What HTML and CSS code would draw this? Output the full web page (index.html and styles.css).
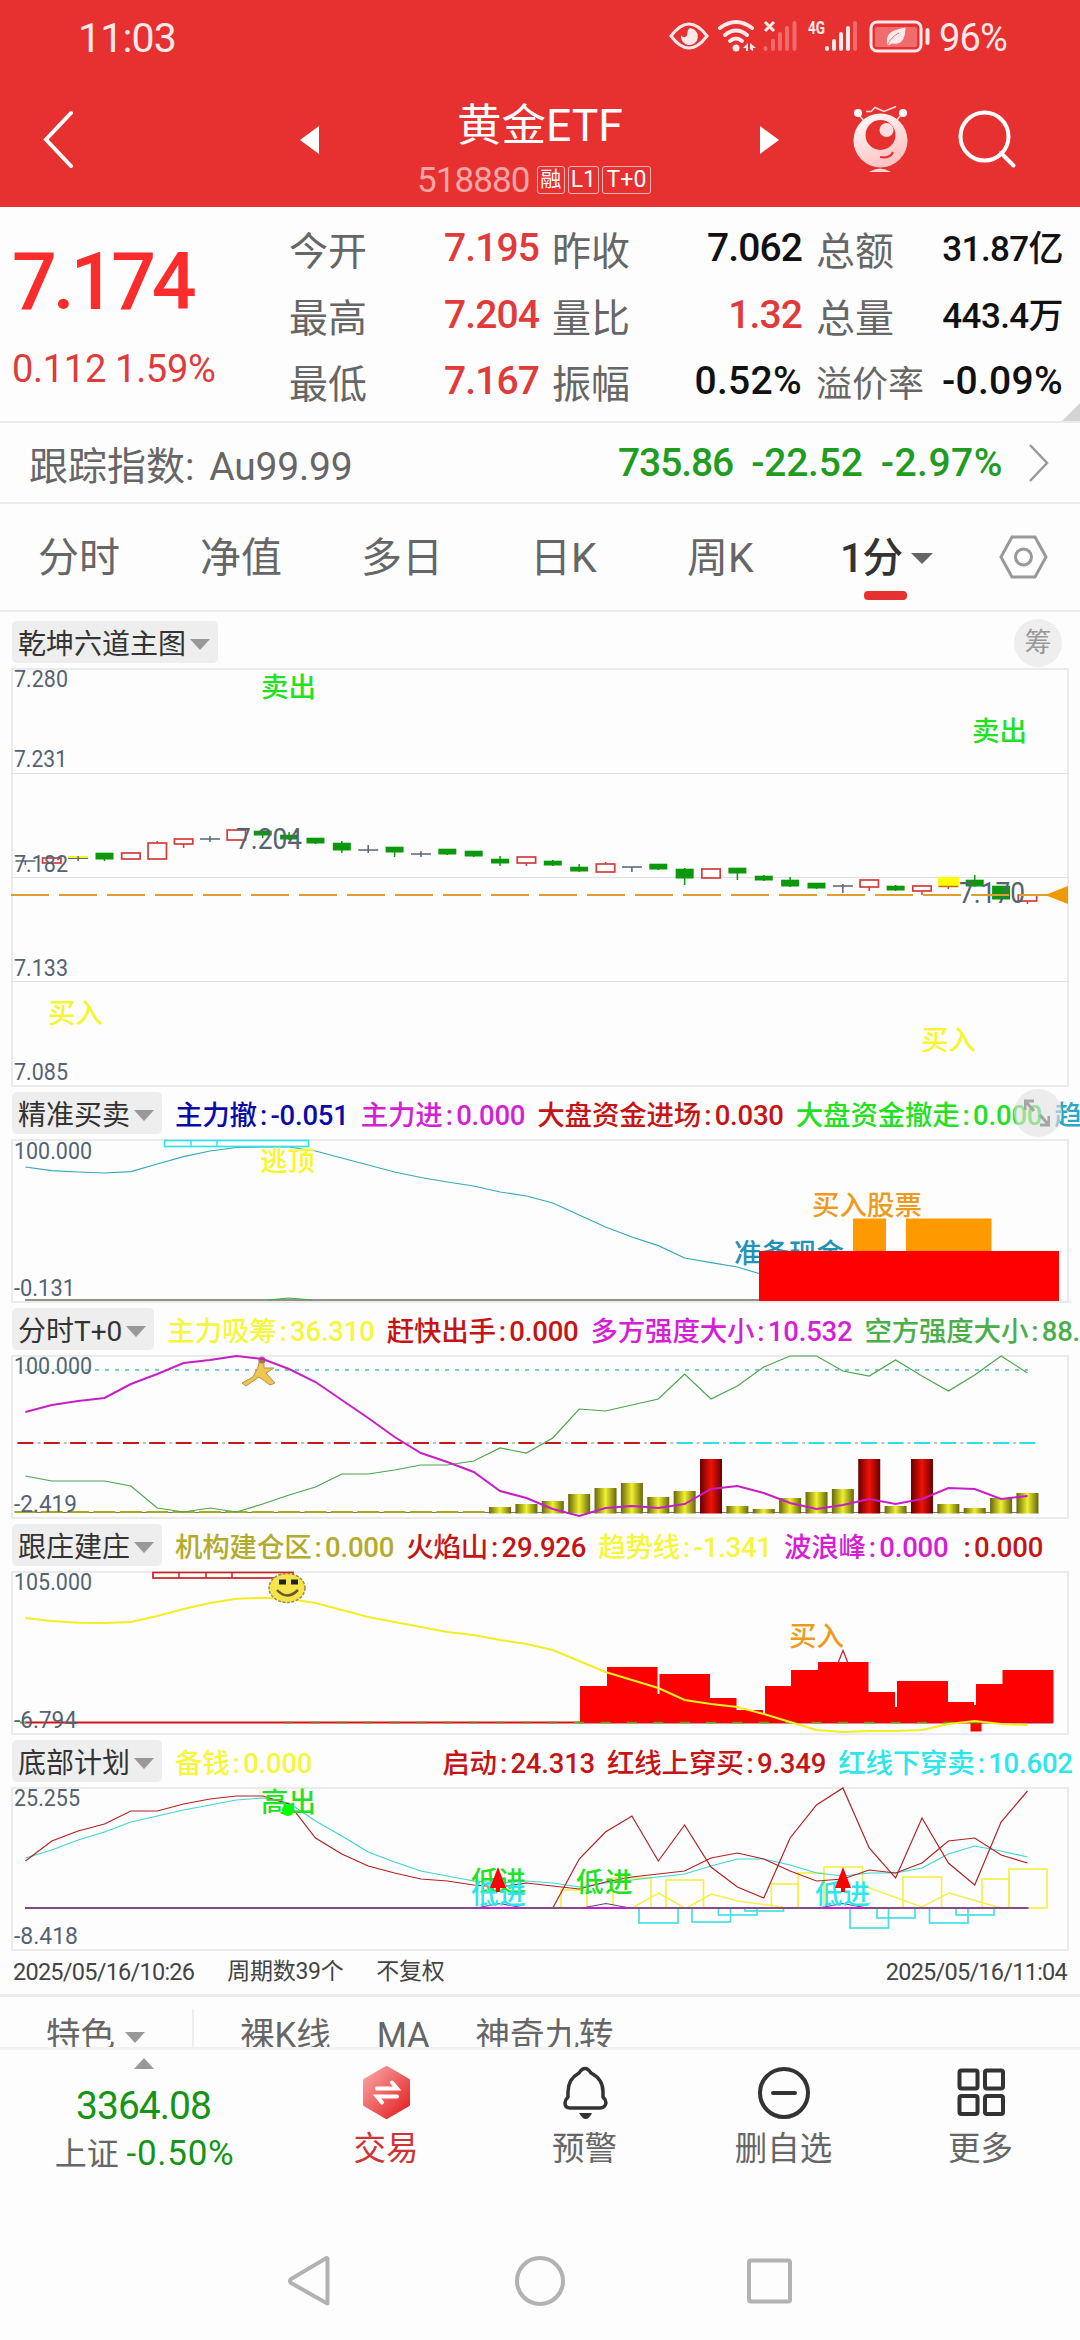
FILE: index.html
```html
<!DOCTYPE html>
<html lang="zh-CN">
<head>
  <meta charset="utf-8">
  <title>黄金ETF 518880</title>
  <meta name="viewport" content="width=device-width, initial-scale=1">
  <link rel="stylesheet" href="styles.css">
</head>
<body>
  <header class="top">
    <div class="status">
      <span class="clock">11:03</span>
      <svg class="status-icons" width="264" height="40" viewBox="668 16 264 40" fill="none" stroke="#ffe9e9">
        <path d="M671 36Q689 12 707 36Q689 60 671 36Z" stroke-width="3" />
        <path d="M690 28a8.500 8.500 0 1 1 -9 7c2 3 5 3 6 0 1-3 0-5 3-7z" fill="#ffe9e9" stroke="none" />
        <g stroke-width="4" stroke-linecap="round">
          <path d="M720 28q16-12 32 0" /><path d="M725 35q11-9 22 0" /><path d="M730 41q6-5 12 0" />
        </g>
        <g fill="#ffe9e9" stroke="none">
          <circle cx="736" cy="48" r="3.500" />
          <path d="M743 48l5-5v8h-2v-3zM750 43l6 5h-3v3l-3-2z" />
        </g>
        <path d="M765 22l9 9M774 22l-9 9" stroke-width="3" />
        <g stroke="#f46a6a" stroke-width="4" stroke-linecap="round">
          <path d="M765.500 48v1M773 41v8M780 34v15M787 28v21M794.500 23v26M855 23v26" />
        </g>
        <text x="808" y="34" class="net" textLength="17" lengthAdjust="spacingAndGlyphs">4G</text>
        <g stroke-width="4" stroke-linecap="round"><path d="M827 48v1M834 41v8M841 34v15M848 28v21" /></g>
        <rect x="871" y="22" width="50" height="29" rx="6" stroke-width="3" />
        <rect x="875" y="27" width="42" height="20" rx="2" fill="#f16d6d" stroke="none" />
        <path d="M887 45c-3-12 6-16 19-18 0 13-5 19-14 17l-3 2zM888 44c3-6 7-9 11-11" fill="#ffe9e9" stroke="#f16d6d" />
        <path d="M927.500 30v13" stroke-width="4" stroke-linecap="round" />
      </svg>
      <span class="battery">96%</span>
    </div>
    <div class="titlebar">
      <svg class="back" width="32" height="58" viewBox="43 110 32 58"><path d="M71 113L46 139.500L71 166" /></svg>
      <svg class="prev" width="20" height="28"><path d="M19 0v28L0 14z" /></svg>
      <div class="title">
        <h1>黄金ETF</h1>
        <p><span class="code">518880</span><b>融</b><b>L1</b><b>T+0</b></p>
      </div>
      <svg class="next" width="20" height="28"><path d="M0 0v28l19-14z" /></svg>
      <svg class="mascot" width="56" height="70" viewBox="852 105 56 70">
        <defs><linearGradient id="body" x1="0" y1="0" x2=".5" y2="1"><stop offset="0" stop-color="#fff" /><stop offset="1" stop-color="#ffc2c2" /></linearGradient></defs>
        <path d="M865 111.500l5 0 4-4 9 4 12-5M858 115l5 6M900 115l-5 6" fill="none" stroke="#ffdada" stroke-width="1.500" />
        <circle cx="857" cy="113" r="4" fill="#fff" /><circle cx="902" cy="113" r="4" fill="#fff" />
        <circle cx="879.500" cy="140.500" r="27" fill="url(#body)" />
        <circle cx="879.500" cy="135" r="15" fill="#e73030" />
        <circle cx="885.500" cy="130" r="7" fill="#ffdede" />
        <path d="M879 157q10 2 13-5" fill="none" stroke="#e73030" stroke-width="2" />
        <path d="M868 172q11-7 22 0z" fill="#ffd5d5" />
      </svg>
      <svg class="search" width="60" height="60" viewBox="956 109 60 60"><circle cx="983.500" cy="136.500" r="24" /><path d="M1000 153l12.500 12.500" /></svg>
    </div>
  </header>

  <section class="quote">
    <div class="last">
      <strong>7.174</strong>
      <span>0.112 1.59%</span>
    </div>
    <dl class="facts">
      <dt>今开</dt><dd class="red">7.195</dd><dt>昨收</dt><dd>7.062</dd><dt>总额</dt><dd class="unit">31.87亿</dd>
      <dt>最高</dt><dd class="red">7.204</dd><dt>量比</dt><dd class="red">1.32</dd><dt>总量</dt><dd class="unit">443.4万</dd>
      <dt>最低</dt><dd class="red">7.167</dd><dt>振幅</dt><dd class="pct">0.52%</dd><dt class="small">溢价率</dt><dd class="pct">-0.09%</dd>
    </dl>
    <i class="corner"></i>
  </section>

  <section class="track">
    <span>跟踪指数: <em>Au99.99</em></span>
    <span class="green"><em>735.86</em><em>-22.52</em><em>-2.97%</em></span>
    <svg width="24" height="42"><path d="M3 3l17 18L3 39" /></svg>
  </section>

  <nav class="tabs">
    <a>分时</a><a>净值</a><a>多日</a><a>日K</a><a>周K</a>
    <a class="active">1分<i class="caret"></i></a>
    <svg width="50" height="46" viewBox="997 534 50 46"><path d="M1011 537h23l11 20-11 20h-23l-11-20z" /><circle cx="1022.500" cy="557" r="8" /></svg>
  </nav>

  <main class="charts">
    <div class="bar first"><span class="tag">乾坤六道主图<i class="caret"></i></span><span class="round">筹</span></div>
    <svg class="plot main" id="kline" viewBox="11 668 1058 419"></svg>

    <div class="bar">
      <span class="tag">精准买卖<i class="caret"></i></span>
      <div class="legend">
        <span style="color:#0a0aa8">主力撤<i>:</i>-0.051</span>
        <span style="color:#d41fd4">主力进<i>:</i>0.000</span>
        <span style="color:#c51414">大盘资金进场<i>:</i>0.030</span>
        <span style="color:#22e022">大盘资金撤走<i>:</i>0.000</span>
        <span style="color:#2ba6c4">趋势<i>:</i>8.2</span>
      </div>
      <span class="round expand"><svg width="26" height="28"><path d="M1 11V2h9M2 3l8 9M25 17v9h-9M24 25l-8-9" /></svg></span>
    </div>
    <svg class="plot" id="precise" viewBox="11 1139 1058 164"></svg>

    <div class="bar">
      <span class="tag">分时T+0<i class="caret"></i></span>
      <div class="legend">
        <span style="color:#f6f63c">主力吸筹<i>:</i>36.310</span>
        <span style="color:#c51414">赶快出手<i>:</i>0.000</span>
        <span style="color:#d41fd4">多方强度大小<i>:</i>10.532</span>
        <span style="color:#4bae4b">空方强度大小<i>:</i>88.345</span>
      </div>
    </div>
    <svg class="plot" id="tzero" viewBox="11 1355 1058 164"></svg>

    <div class="bar">
      <span class="tag">跟庄建庄<i class="caret"></i></span>
      <div class="legend">
        <span style="color:#b3ab2c">机构建仓区<i>:</i>0.000</span>
        <span style="color:#c51414">火焰山<i>:</i>29.926</span>
        <span style="color:#f6f63c">趋势线<i>:</i>-1.341</span>
        <span style="color:#d41fd4">波浪峰<i>:</i>0.000</span>
        <span style="color:#c51414"><i>:</i>0.000</span>
      </div>
    </div>
    <svg class="plot" id="banker" viewBox="11 1571 1058 164"></svg>

    <div class="bar">
      <span class="tag">底部计划<i class="caret"></i></span>
      <div class="legend">
        <span style="color:#f6f63c">备钱<i>:</i>0.000</span>
        <span class="start" style="color:#c51414">启动<i>:</i>24.313</span>
        <span style="color:#c51414">红线上穿买<i>:</i>9.349</span>
        <span style="color:#2ce6ea">红线下穿卖<i>:</i>10.602</span>
      </div>
    </div>
    <svg class="plot" id="bottom" viewBox="11 1787 1058 164"></svg>

    <div class="dates">
      <span>2025/05/16/10:26</span><span class="cn">周期数39个</span><span class="cn">不复权</span><span>2025/05/16/11:04</span>
    </div>
  </main>

  <div class="features">
    <span class="pick">特色<i class="caret"></i></span><span>裸K线</span><span>MA</span><span>神奇九转</span>
  </div>

  <footer class="actions">
    <div class="index">
      <i class="up"></i>
      <span class="pts">3364.08</span>
      <span class="chg">上证 <em>-0.50%</em></span>
    </div>
    <div class="action hot">
      <svg width="56" height="56" viewBox="358 2065 56 56">
        <defs><linearGradient id="hex" x1="0" y1="0" x2="1" y2="1"><stop offset="0.100" stop-color="#f69a9a" /><stop offset=".9" stop-color="#e62a2a" /></linearGradient></defs>
        <path d="M386.500 2068L408 2080.500V2104.500L386.500 2117L365 2104.500V2080.500Z" fill="url(#hex)" stroke="url(#hex)" stroke-width="4" stroke-linejoin="round" />
        <path d="M377 2088.500h20l-5-6M397 2096.500h-20l5 6" fill="none" stroke="#fff" stroke-width="4" stroke-linecap="round" />
      </svg>
      <span>交易</span>
    </div>
    <div class="action">
      <svg width="56" height="56" viewBox="556 2065 56 56">
        <path d="M578 2073Q584 2064 590 2073Q602 2079 602 2092V2097Q605 2100 605 2103Q604 2108 599 2108H569Q564 2108 564 2103Q564 2100 567 2097V2092Q567 2079 578 2073Z" fill="none" stroke="#333" stroke-width="3.500" stroke-linejoin="round" />
        <path d="M578 2113h13q-6 12-13 0z" fill="#333" />
      </svg>
      <span>预警</span>
    </div>
    <div class="action">
      <svg width="56" height="56" viewBox="755 2065 56 56" fill="none" stroke="#333" stroke-width="4"><circle cx="783" cy="2093" r="24" /><path d="M772 2093h22" stroke-linecap="round" /></svg>
      <span>删自选</span>
    </div>
    <div class="action">
      <svg width="56" height="56" viewBox="952 2065 56 56" fill="none" stroke="#333" stroke-width="4">
        <rect x="958.500" y="2070.500" width="18" height="18" rx="2" /><rect x="984" y="2070.500" width="18" height="18" rx="2" />
        <rect x="958.500" y="2096" width="18" height="18" rx="2" /><rect x="984" y="2096" width="18" height="18" rx="2" />
      </svg>
      <span>更多</span>
    </div>
  </footer>

  <div class="sysnav">
    <svg width="48" height="56" viewBox="284 2254 48 56"><path d="M327.500 2260v44q0 1-1 0L291 2284q-2-2 0-4l35.500-21q1 0 1 1z" /></svg>
    <svg width="56" height="56" viewBox="512 2254 56 56"><circle cx="540" cy="2282" r="23" /></svg>
    <svg width="56" height="56" viewBox="741 2254 56 56"><rect x="749" y="2261.500" width="41" height="41" rx="2" /></svg>
  </div>

  <script src="charts.js"></script>
</body>
</html>
```
FILE: styles.css
```css
* { box-sizing: border-box; }
body { margin: 0; width: 1080px; height: 2340px; overflow: hidden; background: #fdfdfd; color: #666; font-family: Roboto, "Noto Sans CJK SC", sans-serif; }
h1, p, dl, dd { margin: 0; font-weight: 400; }
em, i { font-style: normal; }
svg { display: block; }
.caret { display: inline-block; border: 10px solid transparent; border-top: 11px solid #999; border-bottom: 0; }

/* header */
.top { height: 207px; background: #e73030; color: #fff; }
.status { display: flex; align-items: center; height: 72px; padding-left: 78px; }
.clock { width: 590px; font-size: 41px; letter-spacing: -.8px; padding-top: 4px; color: #ffe9e9; }
.battery { margin-left: 7px; padding-top: 4px; font-size: 38px; letter-spacing: -.8px; color: #ffe9e9; }
.net { font-size: 19px; font-weight: 700; fill: #ffe9e9; stroke: none; }
.titlebar { display: flex; height: 135px; padding-left: 43px; }
.titlebar > svg { flex: none; }
.back { margin-top: 38px; fill: none; stroke: #fff; stroke-width: 4; stroke-linecap: round; }
.prev { margin: 54px 0 0 225px; fill: #fff; }
.title { width: 440px; text-align: center; }
.title h1 { margin-top: 23px; height: 62px; line-height: 62px; font-size: 44.5px; }
.title p { display: flex; justify-content: center; align-items: center; height: 40px; margin-top: 3px; padding-right: 12px; gap: 3px; }
.code { margin-right: 4px; font-size: 35px; letter-spacing: -.9px; color: #f7a5a5; }
.title b { height: 28px; min-width: 28px; padding: 0 2px; border: 1.5px solid #f9b5b5; border-radius: 3px; font-size: 23px; line-height: 25px; font-weight: 400; }
.title b:nth-child(2) { font-size: 21px; }
.title b:last-child { min-width: 49px; }
.next { margin-top: 54px; fill: #fff; }
.mascot { margin: 33px 0 0 73px; }
.search { margin: 37px 0 0 48px; fill: none; stroke: #fff; stroke-width: 4; stroke-linecap: round; }

/* quote */
.quote { position: relative; display: flex; height: 216px; padding: 10px 17px 0 12px; border-bottom: 2px solid #ebebeb; }
.last { width: 277px; color: #e03a3a; }
.last strong { display: block; height: 114px; padding-top: 8px; line-height: 114px; font-size: 79px; font-weight: 500; letter-spacing: -4.2px; color: #fb2c2c; }
.last span { display: block; margin-top: 8px; line-height: 60px; font-size: 38px; letter-spacing: -.3px; white-space: nowrap; }
.facts { display: grid; flex: 1; grid-template-columns: 120px 130px 110px 153px 124px 137px; grid-template-rows: repeat(3, 66.5px); line-height: 62px; font-size: 39px; }
.facts dt { padding-top: 4px; white-space: nowrap; }
.facts dt:nth-of-type(3n + 2) { padding-left: 13px; }
.facts dt:nth-of-type(3n) { padding-left: 14px; }
.facts dt.small { font-size: 36px; }
.facts dd { text-align: right; color: #111; letter-spacing: -.9px; font-weight: 500; white-space: nowrap; }
.facts dd.red { color: #e03a3a; }
.facts dd.unit { font-size: 35px; letter-spacing: -.6px; padding-top: 2px; }
.facts dd.pct { letter-spacing: .3px; }
.corner { position: absolute; right: 0; bottom: 0; border-left: 18px solid transparent; border-bottom: 18px solid #d5d5d5; }

.track { display: flex; align-items: center; height: 81px; padding-left: 29px; border-bottom: 2px solid #ebebeb; font-size: 39px; }
.track em { margin-left: 5px; letter-spacing: -.2px; }
.track .green { display: flex; margin-left: auto; font-weight: 500; color: #219c21; }
.track .green em { margin-left: 18px; }
.track .green em:first-child { letter-spacing: -1.1px; }
.track .green em:last-child { letter-spacing: .5px; }
.track svg { margin: 0 29px 0 24px; fill: none; stroke: #999; stroke-width: 2.5; }

/* period tabs */
.tabs { display: grid; grid-template-columns: 162px 161px 169px 157px 153px 158px 50px; height: 108px; padding-left: 38px; border-bottom: 2px solid #ebebeb; line-height: 109px; font-size: 41px; }
.tabs .active { position: relative; font-weight: 500; color: #333; letter-spacing: -1px; }
.tabs .active::after { content: ""; position: absolute; left: 24px; top: 87px; width: 43px; height: 9px; border-radius: 4px; background: #e73030; }
.tabs .caret { margin-left: 9px; vertical-align: 8px; border-width: 11px 11px 0; border-top-color: #666; }
.tabs svg { margin-top: 30px; fill: none; stroke: #999; stroke-width: 3; }

/* indicator panels */
.bar { position: relative; display: flex; align-items: center; height: 52px; padding-left: 12px; overflow: hidden; }
.bar.first { height: 56px; padding-top: 4px; }
.tag { flex: none; display: flex; align-items: center; gap: 4px; height: 42px; padding: 0 8px 0 6px; border-radius: 5px; background: #eee; color: #333; font-size: 28px; }
.tag .caret { margin-top: 4px; }
.round { position: absolute; right: 18px; top: 7px; width: 48px; height: 48px; border-radius: 50%; background: #eee; color: #999; font-size: 27px; line-height: 48px; text-align: center; }
.round.expand { top: 2px; background: rgba(225, 225, 225, .6); }
.expand svg { margin: 10px 0 0 10px; fill: none; stroke: #a5a5a5; stroke-width: 3; }
.legend { display: flex; align-items: baseline; gap: 12px; margin-left: 13px; font-size: 27.5px; font-weight: 500; white-space: nowrap; letter-spacing: -.2px; }
.legend i { display: inline-block; width: 13.5px; padding-left: 3px; }
.legend .start { margin-left: 118px; }
.plot { width: 1058px; height: 164px; margin-left: 11px; }
.plot.main { height: 419px; }
.plot text { font-size: 27.5px; font-weight: 500; }
.plot .axis { font-size: 24px; font-weight: 400; fill: #546372; }
.plot .peak { font-size: 29px; font-weight: 400; fill: #546372; }
.dates { display: flex; height: 43px; padding: 0 13px; line-height: 42px; font-size: 23.5px; letter-spacing: -.75px; color: #444; }
.dates .cn { font-size: 23px; margin-left: 33px; letter-spacing: -.3px; }
.dates span:last-child { margin-left: auto; }

/* feature strip, cut off by the action bar */
.features { display: flex; height: 56px; padding: 12px 0 0 46px; border-top: 3px solid #ebebeb; border-bottom: 3px solid #f1f1f1; overflow: hidden; font-size: 34.5px; line-height: 52px; }
.features span { margin-right: 46px; flex: none; }
.features .pick { width: 148px; border-right: 2px solid #eee; }
.features .caret { margin-left: 10px; vertical-align: 4px; }

.actions { display: grid; grid-template-columns: 287px 198px 199px 199px 195px; height: 150px; }
.action { display: flex; flex-direction: column; align-items: center; padding-top: 15px; font-size: 32.5px; }
.action span { line-height: 57px; }
.hot { color: #cf3434; }
.index { text-align: center; }
.index .up { display: block; width: 20px; margin: 8px auto 0; border: 10px solid transparent; border-top: 0; border-bottom: 11px solid #999; }
.index span { display: block; line-height: 47px; }
.index .pts { margin-top: 14px; font-size: 39px; letter-spacing: -1px; color: #159415; }
.index .chg { padding-left: 2px; font-size: 32px; }
.index em { color: #159415; font-size: 35px; letter-spacing: .7px; }

.sysnav { display: flex; gap: 178px; padding: 53px 0 0 284px; }
.sysnav svg { fill: none; stroke: #b2b2b2; stroke-width: 4; }
.sysnav svg:nth-child(2) { margin-left: 2px; margin-right: -5px; }
```
FILE: charts.js
```js
const STEP = 26.37;
const cx = i => 25.4 + STEP * i;

const line = (x1, y1, x2, y2, c, w = 1.5) => `<path d="M${x1} ${y1}L${x2} ${y2}" stroke="${c}" stroke-width="${w}" fill="none"/>`;
const rect = (x1, y1, x2, y2, fill, stroke = 'none') => `<rect x="${x1}" y="${y1}" width="${x2 - x1}" height="${y2 - y1}" fill="${fill}" stroke="${stroke}" stroke-width="1.7"/>`;
const frame = (y1, y2) => rect(12, y1, 1068, y2, 'none', '#e8e8e8');
const text = (x, y, s, c) => `<text x="${x}" y="${y}" fill="${c}">${s}</text>`;
const axis = (y, s, w) => `<text class="axis" x="14" y="${y}" textLength="${w}" lengthAdjust="spacingAndGlyphs">${s}</text>`;
const peak = (x, y, s) => `<text class="peak" x="${x}" y="${y}" textLength="66" lengthAdjust="spacingAndGlyphs">${s}</text>`;
const series = (ys, c, w = 1.2, from = 0) =>
  `<polyline points="${ys.map((y, i) => cx(i + from).toFixed(1) + ',' + y).join(' ')}" fill="none" stroke="${c}" stroke-width="${w}"/>`;
const poly = (pts, c, w = 1.5) => `<polyline points="${pts}" fill="none" stroke="${c}" stroke-width="${w}"/>`;
const draw = (id, parts) => { document.getElementById(id).innerHTML = parts.join(''); };

// r = up, g = down, d = doji, s/y = signal; [type, top, bottom, high, low]
const candles = [
  ['d', 861, 861, 861, 865], ['r', 858, 863, 858, 863], ['s', 857, 858, 856, 861], ['g', 853, 859, 853, 861],
  ['r', 853, 859, 853, 859], ['r', 843, 859, 841, 859], ['r', 839, 844, 839, 848], ['d', 839, 839, 836, 842],
  ['r', 830, 840, 830, 840], ['g', 831, 835, 831, 838], ['g', 835, 839, 832, 840], ['g', 838, 843, 838, 844],
  ['g', 843, 850, 841, 853], ['d', 850, 850, 845, 853], ['g', 847, 852, 847, 857], ['d', 854, 854, 851, 857],
  ['g', 849, 854, 849, 855], ['g', 851, 856, 851, 857], ['g', 859, 863, 856, 866], ['r', 857, 863, 857, 866],
  ['g', 861, 865, 860, 866], ['g', 867, 871, 864, 872], ['r', 864, 872, 862, 872], ['d', 867, 867, 867, 872],
  ['g', 864, 869, 864, 870], ['g', 869, 878, 868, 885], ['r', 869, 878, 869, 878], ['g', 868, 873, 868, 880],
  ['g', 876, 880, 875, 881], ['g', 880, 886, 877, 887], ['g', 883, 888, 883, 889], ['d', 886, 886, 884, 893],
  ['r', 880, 887, 880, 891], ['g', 886, 890, 885, 891], ['r', 886, 891, 886, 895], ['y', 877, 886, 877, 889],
  ['g', 880, 886, 875, 887], ['g', 886, 899, 886, 899], ['r', 895, 901, 894, 904]
];
const candle = ([t, top, bottom, high, low], i) => {
  const x = cx(i);
  if (t === 'd') return line(x - 10, top, x + 10, top, '#546372') + line(x, high, x, low, '#546372');
  if (t === 's') return rect(x - 10, 856, x + 10, 858, '#f4f42c') + line(x - 10, 858.5, x + 10, 858.5, '#666', 1) + line(x, high, x, low, '#666');
  if (t === 'r') return rect(x - 9.2, top, x + 9.2, bottom, '#fff', '#d33c3c') + line(x, high, x, top, '#d33c3c') + line(x, bottom, x, low, '#d33c3c');
  if (t === 'y') return line(x, bottom, x, low, '#d33c3c') + rect(x - 10.5, top, x + 10.5, bottom, '#ff0') + line(x - 10, 886.5, x + 10, 886.5, '#c46a10');
  return rect(x - 9, top - .3, x + 9, bottom + .5, '#0c980c') + line(x, high, x, low, '#0c980c');
};
draw('kline', [
  frame(669, 1086),
  ...[773.5, 877.5, 981.5].map(y => line(12, y, 1068, y, '#e0e0e0', 1.2)),
  ...candles.map(candle),
  axis(687, '7.280', 54), axis(767, '7.231', 53), axis(872, '7.182', 54), axis(976, '7.133', 54), axis(1080, '7.085', 54),
  peak(236, 849, '7.204'), peak(959, 902.5, '7.170'),
  '<path d="M11 895H1050" stroke="#dda02f" stroke-width="2" stroke-dasharray="38 10"/>',
  '<path d="M1045 895L1068 886V904Z" fill="#ec9a06"/>',
  text(261, 697, '卖出', '#22e022'), text(972, 741, '卖出', '#22e022'),
  text(48, 1023, '买入', '#f6f62c'), text(921, 1050, '买入', '#f6f62c')
]);

draw('precise', [
  frame(1140, 1302),
  axis(1158.5, '100.000', 78), axis(1296, '-0.131', 61),
  line(25, 1300, 760, 1300, '#6f7060', 1.6), poly('268,1300 289,1298 312,1300', '#3fae3f', 1.2),
  series([1167, 1170.7, 1172, 1173, 1171.7, 1164, 1156.7, 1151, 1147.5, 1147, 1147, 1151, 1158, 1165, 1172, 1177.5, 1182, 1186, 1192, 1196, 1203, 1215, 1227, 1237, 1245.6, 1258, 1262.6, 1267, 1275], '#35a9bb'),
  rect(164.5, 1140.5, 308.5, 1146.5, '#fff', '#35e2e6'), line(191, 1140, 191, 1146, '#35e2e6'), line(217, 1140, 217, 1146, '#35e2e6'),
  text(260, 1171, '逃顶', '#f6f62c'), text(812, 1215, '买入股票', '#ee9a1c'), text(734, 1262.5, '准备现金', '#1f92b8'),
  rect(853, 1218.5, 886, 1251, '#ff9900'), rect(906, 1218.5, 991.5, 1251, '#ff9900'),
  rect(759, 1251, 1059, 1301, '#f00')
]);

const tops = { 18: 1507, 19: 1504, 20: 1501, 21: 1494, 22: 1488, 23: 1483, 24: 1497, 25: 1491, 26: 1459, 27: 1506, 28: 1509, 29: 1498, 30: 1492, 31: 1489, 32: 1459, 33: 1506, 34: 1459, 35: 1504, 36: 1508, 37: 1498, 38: 1493 };
const bars = [];
for (let i = 0; i < 39; i++) {
  const x = cx(i);
  bars.push(line(x - 8, 1443, x + 8, 1443, i < 25 ? '#c51818' : '#2fdfe3', 2));
  if (i < 38) bars.push(line(x + 12, 1443, x + 15, 1443, '#aaa', 1.5));
  if (tops[i]) bars.push(rect(x - 11, tops[i], x + 11, 1513.5, tops[i] === 1459 ? 'url(#redbar)' : 'url(#goldbar)'));
  else bars.push(rect(x - 11, 1511, x + 11, 1513, '#a8a820'));
}
draw('tzero', [
  '<defs><linearGradient id="goldbar"><stop stop-color="#66660a"/><stop offset=".5" stop-color="#f0f030"/><stop offset="1" stop-color="#66660a"/></linearGradient>',
  '<linearGradient id="redbar"><stop stop-color="#600"/><stop offset=".5" stop-color="#f11206"/><stop offset="1" stop-color="#600"/></linearGradient></defs>',
  frame(1356, 1518),
  line(25, 1512.5, 1028, 1512.5, '#777', 1),
  ...bars,
  '<path d="M25 1370H1028" stroke="#4db9c6" stroke-width="1.5" stroke-dasharray="4 6"/>',
  axis(1374, '100.000', 78), axis(1512, '-2.419', 63),
  '<path d="M260 1358l4 3 0 7 10 0-8 5 9 10-5 2-11-8-13 9-4-3 11-6 5-10z" fill="#f0c451" stroke="#b98f54" stroke-width="1"/><circle cx="262" cy="1360" r="3.5" fill="#a8705f"/>',
  series([1476, 1481, 1481, 1481, 1486, 1508, 1512, 1508, 1512, 1504, 1495, 1487, 1474, 1474, 1470, 1465, 1465, 1461, 1448, 1453, 1438, 1409, 1411, 1405, 1399, 1374, 1399, 1386, 1367, 1356, 1356, 1371, 1376, 1360, 1376, 1391, 1375, 1356, 1373], '#4ba54b'),
  series([1412, 1405, 1401, 1398, 1384, 1374, 1363, 1360, 1356, 1359, 1369, 1382, 1400, 1418, 1437, 1453, 1462, 1472, 1491, 1498, 1509, 1516, 1508, 1506, 1508, 1504, 1489, 1486, 1493, 1503, 1509, 1505, 1499, 1504, 1499, 1488, 1489, 1499, 1496], '#c71fc7', 2)
]);

const steps = [
  [580, 607, 1686], [607, 657.5, 1667], [657, 660, 1694], [659.5, 710, 1674], [710, 736.5, 1698], [736, 763, 1710], [763, 765, 1714],
  [765, 791.5, 1686], [791, 818, 1670], [818, 868.5, 1662], [868, 895, 1692], [895, 897, 1707], [897, 948, 1681], [947.5, 974, 1702],
  [974, 976, 1705], [976, 1003, 1684], [1002.5, 1053.5, 1670]
];
const ticks = [];
for (let i = 10; i < 37; i++) ticks.push(line(cx(i) - 5, 1722.5, cx(i) + 5, 1722.5, i > 20 ? '#4fae12' : '#8a6a12', 1.5));
draw('banker', [
  frame(1572, 1734),
  rect(153, 1572.5, 293, 1578, '#fff', '#c52424'), ...[179, 206, 232].map(x => line(x, 1572, x, 1578, '#c52424')),
  ...steps.map(([a, b, t]) => rect(a, t, b, 1723, '#f00')),
  rect(970.5, 1723, 981.5, 1731.5, '#f00'),
  line(25, 1722.5, 1053, 1722.5, '#d41414', 2), line(20, 1722.5, 26, 1722.5, '#2fd02f', 2), ...ticks,
  poly('838,1663 843,1650.5 848,1663', '#c52424', 1.3),
  series([1618, 1621, 1622.7, 1623, 1622, 1616, 1609, 1603, 1598.7, 1597.7, 1599, 1603, 1610, 1617, 1622, 1627, 1632, 1635, 1640, 1644, 1650, 1661, 1672, 1680, 1688, 1700, 1704, 1707, 1714, 1722, 1730, 1732, 1731, 1731, 1730, 1724, 1721, 1724, 1725], '#f2ee24', 2),
  axis(1590, '105.000', 78), axis(1728, '-6.794', 63),
  '<ellipse cx="287" cy="1588" rx="18" ry="14.5" fill="#f5e54a" stroke="#9c8a4a" stroke-width="1.5" stroke-dasharray="3 1.5"/>',
  '<path d="M279 1582h7M291 1582h7" stroke="#222" stroke-width="5"/><path d="M277 1590q10 11 21 0" stroke="#665a30" stroke-width="2.5" fill="none"/>',
  text(789, 1645.5, '买入', '#ee9a1c')
]);

const yellow = '#f4f04a', cyan = '#46dfe4';
const up = [[561, 587, 1890], [613, 651, 1878], [666, 703.5, 1880], [771.5, 798, 1884], [798, 824, 1873], [824, 862.5, 1867], [903, 941.5, 1877], [982, 1009, 1879], [1009, 1047, 1869]];
const down = [[639, 678, 1923], [692, 730.5, 1922], [718.5, 757, 1915], [745, 783.5, 1911], [850, 888.5, 1928], [877, 915, 1918], [929.5, 968, 1923], [956, 994, 1915]];
const arrow = x => `<path d="M${x} 1867l8 21h-6v4h-4v-4h-6z" fill="#f00"/>`;
draw('bottom', [
  frame(1788, 1950),
  axis(1806, '25.255', 66), axis(1944, '-8.418', 64),
  ...up.map(([a, b, t]) => rect(a, t, b, 1908, 'none', yellow)),
  ...down.map(([a, b, t]) => rect(a, 1908, b, t, 'none', cyan)),
  poly('634,1907 658.5,1893 683,1907', yellow), poly('688,1907 711.5,1894 738,1901 783,1907', yellow),
  poly('862,1885 869.5,1888 922,1907 949,1893 1001,1908', yellow),
  series([1858, 1850, 1840, 1832, 1822, 1816, 1810, 1805, 1800, 1798, 1803, 1821, 1836, 1852, 1862, 1871, 1876, 1881, 1883, 1881, 1883, 1887, 1883, 1880, 1877, 1874, 1866, 1859, 1859, 1865, 1873, 1876, 1873, 1873, 1868, 1854, 1846, 1851, 1857], '#3fd3d8'),
  series([1861, 1841, 1831, 1824, 1811, 1811, 1804, 1799, 1796, 1796, 1804, 1838, 1854, 1866, 1873, 1879, 1881, 1885, 1887, 1883, 1886, 1889, 1882, 1877, 1874, 1871, 1858, 1853, 1859, 1871, 1881, 1879, 1870, 1873, 1863, 1841, 1838, 1855, 1863], '#b02222'),
  series([1908, 1859, 1832, 1816, 1861, 1825, 1867, 1887, 1898, 1838, 1805, 1788, 1848, 1878, 1818, 1863, 1885, 1822, 1791], '#b02222', 1.2, 20),
  line(25, 1908, 1028.5, 1908, '#884a86', 2),
  ...[500, 606, 843].map(x => poly(`${x - 24},1908 ${x},1903.5 ${x + 24},1908`, '#5a4a80', 1.2) + line(x - 22, 1908, x + 22, 1908, '#c21fd0', 2)),
  text(261, 1812, '高出', '#22e022'), '<circle cx="288" cy="1810" r="6" fill="#0f0"/>',
  text(471, 1891, '低进', '#22e022'), text(471, 1904, '低进', '#2ce6ea'), arrow(498),
  text(576, 1892, '低', '#22e022'), text(605, 1892, '进', '#22e022'),
  text(815, 1904, '低进', '#2ce6ea'), arrow(843)
]);
```
